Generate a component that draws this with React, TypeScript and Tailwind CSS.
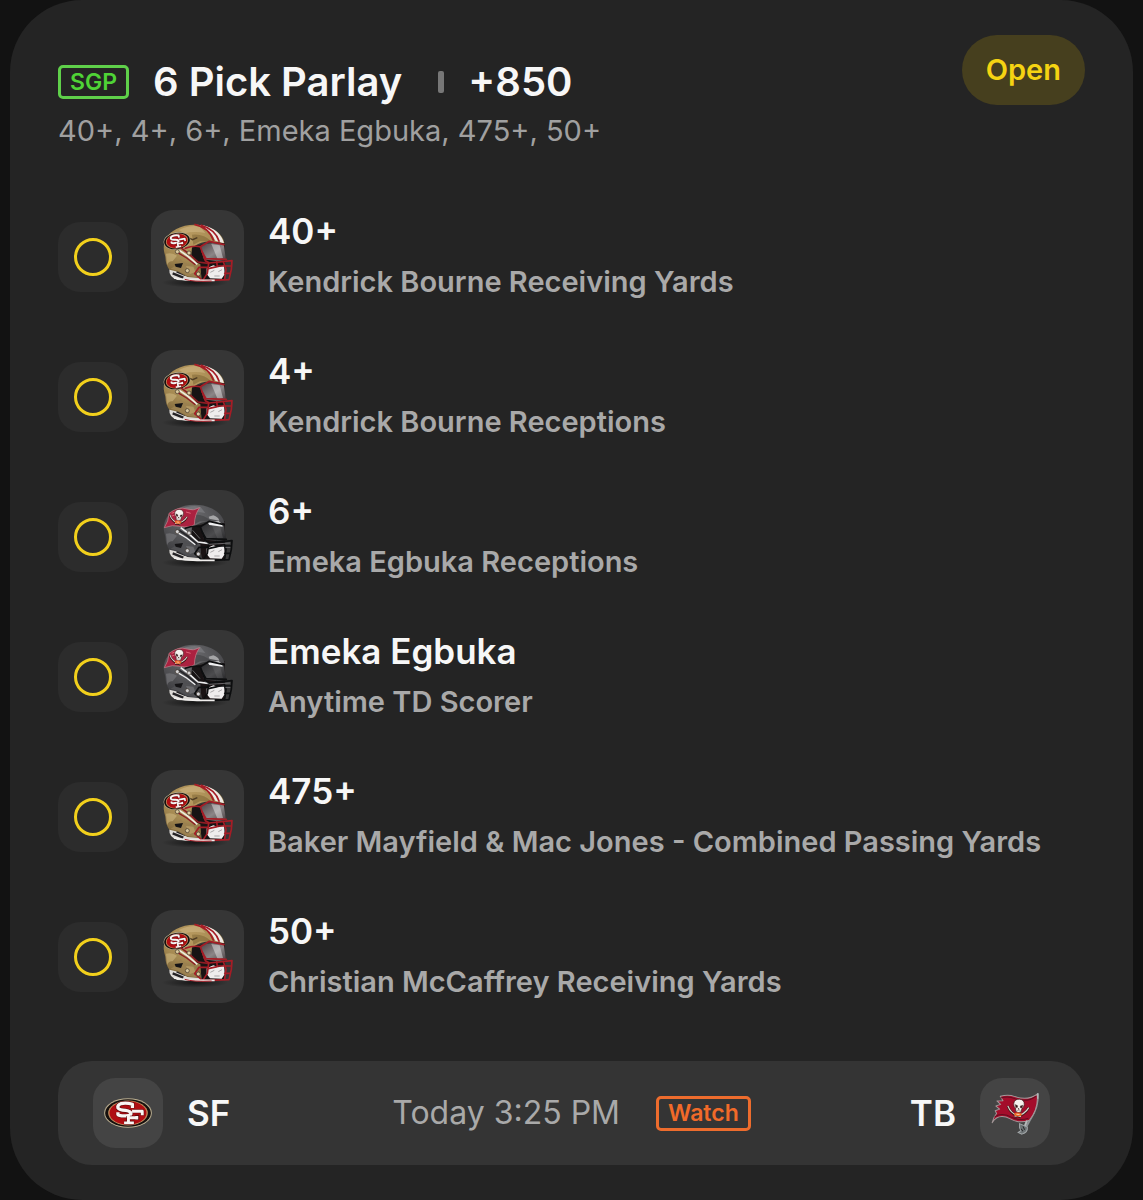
import React from "react";

type Team = "SF" | "TB";

type Pick = { value: string; label: string; team: Team };

const picks: Pick[] = [
  { value: "40+", label: "Kendrick Bourne Receiving Yards", team: "SF" },
  { value: "4+", label: "Kendrick Bourne Receptions", team: "SF" },
  { value: "6+", label: "Emeka Egbuka Receptions", team: "TB" },
  { value: "Emeka Egbuka", label: "Anytime TD Scorer", team: "TB" },
  { value: "475+", label: "Baker Mayfield & Mac Jones - Combined Passing Yards", team: "SF" },
  { value: "50+", label: "Christian McCaffrey Receiving Yards", team: "SF" },
];

/* Interlocking S and F on a red oval, centred on the origin, 140 x 88 units. */
function OvalMark() {
  return (
    <g>
      <ellipse rx="71" ry="44" fill="#b9ad8f" />
      <ellipse rx="68" ry="41" fill="#15100e" />
      <ellipse rx="59" ry="37" fill="#c08d5c" />
      <ellipse rx="55" ry="35" fill="#b00d12" />
      <g fill="none" strokeLinejoin="round" transform="translate(-3 -1) scale(1.08)">
        <path d="M15 -12V-23Q-2 -28 -16 -25Q-27 -21 -25 -13Q-21 -7 -4 -6Q11 -4 11 3Q8 10 -8 9Q-22 9 -25 5V0" stroke="#5c0a0c" strokeWidth="12" />
        <path d="M15 -13V-23Q-2 -28 -16 -25Q-27 -21 -25 -13Q-21 -7 -4 -6Q11 -4 11 3Q8 10 -8 9Q-22 9 -25 5V-1" stroke="#f9f5f3" strokeWidth="9" />
        <path d="M16 -4H42V8M4 9V27M-8 28H20M8 14H28V6M28 20V12" stroke="#5c0a0c" strokeWidth="11" />
        <path d="M14 -4H42V7M4 6V27M-8 28H19M8 14H27M27 19V9" stroke="#f9f5f3" strokeWidth="8" />
      </g>
    </g>
  );
}

/* Skull with crossed swords, centred on the origin. */
function SkullMark() {
  return (
    <g>
      <path d="M-34 -2Q-22 26 10 29M32 -2Q20 26 -10 29" fill="none" stroke="#3c1718" strokeWidth="8" />
      <path d="M-34 -2Q-22 24 10 28M32 -2Q20 24 -10 28" fill="none" stroke="#d9d2cc" strokeWidth="4" />
      <path d="M-16 -12Q-14 -26 1 -26Q17 -26 17 -10Q17 -2 11 2L9 14Q0 19 -8 13L-9 3Q-17 -1 -16 -12Z" fill="#f5f1ee" stroke="#35191a" strokeWidth="2" />
      <path d="M-11 -8L-3 -5L-4 1L-9 0ZM13 -8L5 -5L6 1L11 0ZM0 2L3 6H-1ZM-6 10H8" fill="#33191a" stroke="#33191a" />
      <ellipse cx="0" cy="22" rx="12" ry="6" fill="#ee6421" />
      <path d="M-5 22H5" stroke="#fff" strokeWidth="2" />
    </g>
  );
}

function Helmet({ team }: { team: Team }) {
  const sf = team === "SF";
  const id = sf ? "sf" : "tb";
  const mask = sf ? "#a51d26" : "#0d0e0f";
  return (
    <svg viewBox="3 18 279 279" className="size-full" role="img" aria-label={sf ? "San Francisco helmet" : "Tampa Bay helmet"}>
      <defs>
        <radialGradient id={"shell-" + id} cx="0.45" cy="0.25" r="0.85">
          <stop offset="0" stopColor={sf ? "#b99b60" : "#6d6d70"} />
          <stop offset="0.5" stopColor={sf ? "#a58a53" : "#525255"} />
          <stop offset="1" stopColor={sf ? "#6d5730" : "#333336"} />
        </radialGradient>
        <linearGradient id={"visor-" + id} x1="0" y1="0" x2="1" y2="1">
          <stop offset="0" stopColor={sf ? "#4b4143" : "#2b2b2d"} />
          <stop offset="0.55" stopColor={sf ? "#8b8587" : "#4c4c4e"} />
          <stop offset="1" stopColor={sf ? "#443b3e" : "#222224"} />
        </linearGradient>
        <radialGradient id={"shade-" + id}>
          <stop offset="0" stopColor="#000" stopOpacity="0.6" />
          <stop offset="1" stopColor="#000" stopOpacity="0" />
        </radialGradient>
      </defs>
      <ellipse cx="135" cy="236" rx="100" ry="15" fill={"url(#shade-" + id + ")"} />

      <path d="M132 125L224 112L226 172L222 226L158 228Z" fill="#1a1314" />
      <path d="M58 196Q76 196 84 205L104 214L152 221L151 231L82 228Q56 219 58 196Z" fill="#dedbd7" />
      <path d="M68 208L100 221M80 202L106 213" stroke="#252326" strokeWidth="7" />
      <path
        d="M43 146C36 117 50 90 79 75C107 60 151 57 184 73C207 84 219 99 224 118L197 114Q158 108 133 127L126 149L151 181L154 223L112 219L84 203L58 197Q47 182 46 158Z"
        fill={"url(#shell-" + id + ")"}
      />
      {/* Light and dark patches of the glossy shell */}
      <path d="M86 78Q120 62 151 68L166 87Q132 80 104 88Z" fill={sf ? "#d5be8c" : "#8a8a8d"} fillOpacity="0.5" />
      <path d="M126 92Q160 88 184 112L150 112L130 122Z" fill={sf ? "#77602f" : "#3a3a3c"} fillOpacity="0.5" />
      <path d="M48 149Q66 144 81 155L68 172Q56 170 51 184Z" fill={sf ? "#cdb67f" : "#7b7b7e"} fillOpacity="0.6" />
      <path d="M91 165Q104 182 126 180L146 205L148 221L112 216L84 200L62 194Q78 187 91 165Z" fill={sf ? "#9b8150" : "#505053"} />
      <path d="M108 186L130 188L136 204L120 210Z" fill={sf ? "#c3a870" : "#7c7c7f"} fillOpacity="0.6" />
      <path d="M74 180L99 177L93 192L77 188Z" fill="#151416" />
      <path d="M126 130L152 126L158 182L140 176L124 152Z" fill="#171314" />

      {sf ? (
        <g>
          <path d="M138 62Q181 72 196 110L222 118Q211 77 160 64Z" fill="#eeeae6" />
          <path d="M133 61Q177 70 191 110M152 63Q196 76 208 113" fill="none" stroke="#a51d26" strokeWidth="5" />
          <path d="M119 103L128 107L142 101" fill="none" stroke="#4d3b22" strokeWidth="4" />
          <g transform="translate(81 111) rotate(-9) scale(.57 .6)">
            <OvalMark />
          </g>
        </g>
      ) : (
        <g>
          <path d="M43 131Q56 112 57 88Q86 66 111 75Q129 82 149 71Q134 90 133 122Q116 132 91 127Q67 121 43 131Z" fill="#ab2140" stroke="#cf8490" strokeWidth="2" />
          <path d="M65 88L81 82M63 97L78 92M108 84L122 88" stroke="#df6579" strokeWidth="3" />
          <g transform="translate(86 97) rotate(7) scale(.8)">
            <SkullMark />
          </g>
          <path d="M176 98L190 94Q205 99 208 110L178 104Z" fill="#a5a5a7" />
        </g>
      )}

      <path d="M150 127Q184 108 222 124L228 169L202 172L162 166Z" fill={"url(#visor-" + id + ")"} />
      <path d="M184 120L209 124L219 162L203 166Z" fill="#fff" fillOpacity={sf ? 0.4 : 0.08} />
      {!sf && <path d="M173 115L206 112L217 120L218 128L178 123Z" fill="#f0f0f1" />}
      <path d="M170 193L190 184L206 190L222 184L224 211L215 224L180 223L170 210Z" fill="#efeded" />
      <path d="M181 205L193 199M205 203L216 197M193 216L209 216" stroke="#a9a6a8" strokeWidth="3" />

      <path d="M92 131L116 149L144 174L174 178" fill="none" stroke={sf ? "#8d1c24" : "#efeff0"} strokeWidth="5" />
      <path d="M88 139L113 156L142 181" fill="none" stroke={sf ? "#eee9df" : "#26262a"} strokeWidth="5" />
      <path d="M83 146L110 162L136 182" fill="none" stroke={sf ? "#8d1c24" : "#efeff0"} strokeWidth="4" />
      <g fill="none" stroke={mask} strokeWidth="5" strokeLinejoin="round" strokeLinecap="round">
        <path d="M106 133Q128 124 151 128L178 112L222 122" />
        <path d="M151 128L166 170L178 177L246 170L244 196L237 227L158 230L134 209L147 190L174 190" />
        <path d="M176 178L172 208L158 230M200 173L202 188L175 194M220 173L228 196L224 226M202 186L243 186M224 208H241M156 143L168 164L229 166" />
      </g>
      {!sf && (
        <path d="M164 173L178 181L240 177M128 139L150 164M226 190H241" fill="none" stroke="#8d8d90" strokeWidth="2" />
      )}
      <g fill={sf ? "#dccb9f" : "#d4d4d6"} stroke="#3e342b" strokeWidth="2">
        <circle cx="82" cy="143" r="6" />
        <circle cx="117" cy="147" r="6" />
        <circle cx="112" cy="200" r="6" />
        <circle cx="145" cy="210" r="6" />
      </g>
      <path d="M72 222Q112 231 157 229H194" fill="none" stroke="#f1efed" strokeWidth="5" />
      {sf && <path d="M104 226Q131 234 185 231" fill="none" stroke="#a51d26" strokeWidth="3" />}
    </svg>
  );
}

function OvalLogo() {
  return (
    <svg viewBox="-104 -104 208 208" className="size-full" role="img" aria-label="San Francisco logo">
      <OvalMark />
    </svg>
  );
}

function FlagLogo() {
  return (
    <svg viewBox="240 54 207 207" className="size-full" role="img" aria-label="Tampa Bay logo">
      <path d="M411 100Q413 139 390 174L374 203" fill="none" stroke="#8d9294" strokeWidth="6" />
      <path
        d="M276 186Q280 169 289 159L285 151L298 146L287 137L301 132L290 122L308 121L300 108Q324 101 343 109Q381 122 409 102Q414 143 386 179Q356 190 330 175Q294 157 276 186Z"
        fill="#a40d2b"
        stroke="#a3999a"
        strokeWidth="3"
        strokeLinejoin="round"
      />
      <path d="M301 113Q325 107 343 115Q378 128 406 108M283 169Q306 154 335 171Q359 182 383 173" fill="none" stroke="#650d20" strokeWidth="3" />
      <g transform="translate(354 141) rotate(5) scale(.94)">
        <SkullMark />
      </g>
      <path d="M411 98V115" stroke="#c4c7c8" strokeWidth="3" />
      <path d="M379 180L370 202" stroke="#b5b8b9" strokeWidth="6" />
      <path d="M357 189L380 199Q382 215 364 220L353 215L361 210L357 201Z" fill="#6d7375" stroke="#a2a7a9" strokeWidth="3" />
      <path d="M367 197L372 207M361 204L367 211" stroke="#27292a" strokeWidth="3" />
    </svg>
  );
}

function PickRow({ pick }: { pick: Pick }) {
  return (
    <li className="flex items-center">
      <span className="flex size-[70px] shrink-0 items-center justify-center rounded-[22px] bg-[#2c2c2c]">
        <span className="size-[38px] rounded-full border-3 border-[#f2d01c]" />
      </span>
      <span className="ml-[23px] size-[93px] shrink-0 overflow-hidden rounded-[22px] bg-[#363636]">
        <Helmet team={pick.team} />
      </span>
      <div className="ml-6 flex min-w-0 flex-col gap-2.5 pb-0.5">
        <h2 className="text-[35px] leading-[43px] font-semibold text-[#f7f7f7]">{pick.value}</h2>
        <p className="text-[29px] leading-[38px] font-semibold text-[#a9a9a9]">{pick.label}</p>
      </div>
    </li>
  );
}

export default function App() {
  return (
    <div className="min-h-screen bg-[#121212] px-2.5 font-['Inter',sans-serif]">
      <main className="rounded-[72px] bg-[#242424] px-12 pt-[35px] pb-[35px]">
        <header className="flex items-start justify-between">
          <div className="pt-[22px]">
            <div className="flex h-[50px] items-center">
              <span className="flex h-[34px] items-center rounded-[5px] border-3 border-[#5fd04a] px-[9px] text-[23px] leading-7 font-semibold text-[#4fd336]">
                SGP
              </span>
              <h1 className="ml-6 text-[40px] leading-[50px] font-semibold text-[#f7f7f7]">6 Pick Parlay</h1>
              <span className="mr-6 ml-9 h-[22px] w-1.5 rounded-[2px] bg-[#777777]" />
              <span className="text-[40px] leading-[50px] font-semibold text-[#f7f7f7]">+850</span>
            </div>
            <p className="mt-1.5 text-[29px] leading-[36px] text-[#a0a0a0]">40+, 4+, 6+, Emeka Egbuka, 475+, 50+</p>
          </div>
          <button type="button" className="h-[70px] rounded-full bg-[#463f1e] px-6 text-[29px] font-semibold text-[#f5d312]">
            Open
          </button>
        </header>

        <ul className="mt-[61px] flex flex-col gap-[47px]">
          {picks.map((pick) => (
            <PickRow key={pick.value} pick={pick} />
          ))}
        </ul>

        <footer className="mt-[58px] flex h-[104px] items-center justify-between rounded-[34px] bg-[#343434] px-[35px]">
          <div className="flex flex-1 items-center gap-6">
            <span className="size-[70px] rounded-[22px] bg-[#444444]">
              <OvalLogo />
            </span>
            <span className="text-[35px] font-semibold text-[#f7f7f7]">SF</span>
          </div>
          <div className="flex items-center gap-9">
            <time className="text-[32px] text-[#a9a9a9]">Today 3:25 PM</time>
            <button type="button" className="h-[35px] rounded-[5px] border-3 border-[#ed6c2d] px-[9px] text-[23px] leading-7 font-semibold text-[#f16a29]">
              Watch
            </button>
          </div>
          <div className="flex flex-1 items-center justify-end gap-6">
            <span className="text-[35px] font-semibold text-[#f7f7f7]">TB</span>
            <span className="size-[70px] rounded-[22px] bg-[#444444]">
              <FlagLogo />
            </span>
          </div>
        </footer>
      </main>
    </div>
  );
}
